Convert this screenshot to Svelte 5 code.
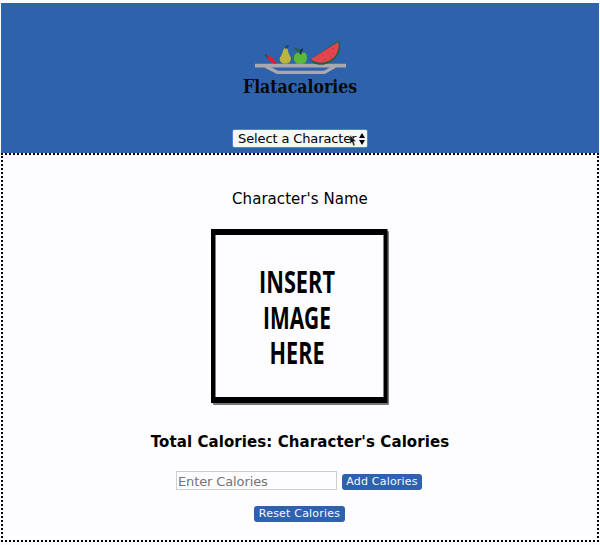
<script>
  let selected = $state('');
  let calories = $state('');
</script>

<div class="page">
  <header>
    <svg class="logo" width="150" height="70" viewBox="0 0 450 210" role="img" aria-label="Flatacalories">
      <path d="M90 107H363" stroke="#aaa8ac" stroke-width="11" />
      <path d="M121 109L157 127H298L330 109" fill="none" stroke="#aaa8ac" stroke-width="10" />
      <path d="M123 78Q131 75 138 81Q149 87 155 102Q135 100 123 78Z" fill="#e21f2b" />
      <path d="M120 73L128 82" stroke="#244b29" stroke-width="4" />
      <path d="M182 54C191 54 188 68 195 77C201 87 197 101 181 101C165 101 160 88 168 78C175 67 173 54 182 54Z" fill="#b9b63b" />
      <path d="M182 56Q183 49 191 48" fill="none" stroke="#203c48" stroke-width="4" />
      <path d="M228 71C237 63 247 69 246 84C245 98 237 104 227 101C216 105 206 97 207 83C208 68 218 65 228 71Z" fill="#5ab83b" />
      <path d="M206 54Q220 50 228 64Q215 67 206 54Z" fill="#26653e" />
      <path d="M227 73Q225 62 234 57" fill="none" stroke="#15312e" stroke-width="5" />
      <path d="M342 31C354 65 331 98 296 104C278 106 262 102 256 88Z" fill="#24603e" />
      <path d="M340 36C345 66 327 91 298 97C280 100 264 95 258 87Z" fill="#e4444f" />
      <path d="M279 86h4m8-9h4m5 12h4m2-22h4m6 14h4m2-25h4m-34 35h4m26-20h4" stroke="#b53d4b" stroke-width="3" />
      <text x="54" y="188" textLength="342" lengthAdjust="spacingAndGlyphs">Flatacalories</text>
    </svg>
    <div class="picker">
      <select bind:value={selected} aria-label="Character">
        <option value="">Select a Character</option>
      </select>
      <svg class="arrows" width="6" height="12" viewBox="0 0 6 12"><path d="M0 5L3 0L6 5ZM0 7H6L3 12Z" /></svg>
      <svg class="pointer" width="7" height="12" viewBox="0 0 7 12"><path d="M1 0V9L3 7L4.5 11L6 10L4.5 6.5H7Z" fill="#111" stroke="#ddd" stroke-width=".5" /></svg>
    </div>
  </header>

  <main>
    <p class="name">Character's Name</p>
    <svg class="placeholder" width="178" height="176" viewBox="0 0 178 176">
      <rect x="2" y="2" width="176" height="174" rx="1" fill="#777" />
      <rect width="176.5" height="174" />
      <rect x="4.5" y="6" width="168" height="162" fill="#fdfdff" />
      <text x="48" y="64" textLength="76" lengthAdjust="spacingAndGlyphs">INSERT</text>
      <text x="52" y="100" textLength="68" lengthAdjust="spacingAndGlyphs">IMAGE</text>
      <text x="58.5" y="135" textLength="55" lengthAdjust="spacingAndGlyphs">HERE</text>
    </svg>
    <h4>Total Calories: Character's Calories</h4>
    <form onsubmit={(e) => e.preventDefault()}>
      <input placeholder="Enter Calories" bind:value={calories} />
      <button class="add">Add Calories</button>
    </form>
    <button class="reset" onclick={() => (calories = '')}>Reset Calories</button>
  </main>
</div>

<style>
  :global(body) {
    background: #fbfbfd;
  }
  .page {
    box-sizing: border-box;
    height: 545px;
    padding: 3px 1px;
    font-family: Verdana, 'DejaVu Sans', sans-serif;
    color: #000;
  }
  header {
    box-sizing: border-box;
    height: 150px;
    padding-top: 27px;
    background: #2f62ac;
    display: flex;
    flex-direction: column;
    align-items: center;
  }
  svg {
    display: block;
  }
  .logo text {
    font: bold 54px 'Roboto Slab', 'DejaVu Serif', serif;
    fill: #07090d;
  }
  .picker {
    position: relative;
    margin-top: 30px;
  }
  select {
    display: block;
    box-sizing: border-box;
    width: 134px;
    height: 17px;
    padding: 0 0 0 5px;
    border: 0;
    border-radius: 1px;
    outline: 1px solid #4c7fe0;
    appearance: none;
    background: #f7f7fa;
    color: #000;
    font: 13px/17px Verdana, 'DejaVu Sans', sans-serif;
    letter-spacing: -0.12px;
  }
  .arrows {
    position: absolute;
    right: 2px;
    top: 3px;
  }
  .pointer {
    position: absolute;
    left: 116px;
    top: 5px;
  }
  main {
    box-sizing: border-box;
    height: 389px;
    border: 2px dotted #000;
    background: #fdfdff;
    display: flex;
    flex-direction: column;
    align-items: center;
  }
  .name {
    margin: 34px 0 0;
    font-size: 15px;
    line-height: 20px;
    letter-spacing: 0.05px;
    white-space: nowrap;
  }
  .placeholder {
    margin-top: 20px;
  }
  .placeholder text {
    font: bold 31px 'Open Sans', sans-serif;
  }
  h4 {
    margin: 27px 0 0;
    font-size: 15px;
    line-height: 20px;
    letter-spacing: 0.08px;
    white-space: nowrap;
  }
  form {
    display: flex;
    align-items: flex-end;
    gap: 5px;
    height: 19px;
    margin-top: 19px;
    padding-right: 2px;
  }
  input {
    box-sizing: border-box;
    width: 161px;
    height: 19px;
    padding: 1px 1px 0;
    border: 1px solid #cfcfd3;
    background: #fdfdff;
    font: 13px Verdana, 'DejaVu Sans', sans-serif;
    letter-spacing: -0.12px;
  }
  input::placeholder {
    color: #747476;
    opacity: 1;
  }
  button {
    box-sizing: border-box;
    height: 16px;
    padding: 0;
    border: 0;
    border-radius: 3px;
    background: #2f62ac;
    color: #f5f8ff;
    font: 11px/16px Verdana, 'DejaVu Sans', sans-serif;
    letter-spacing: 0.2px;
    white-space: nowrap;
  }
  .add {
    width: 80px;
  }
  .reset {
    width: 91px;
    margin: 16px 1px 0 0;
  }
</style>
